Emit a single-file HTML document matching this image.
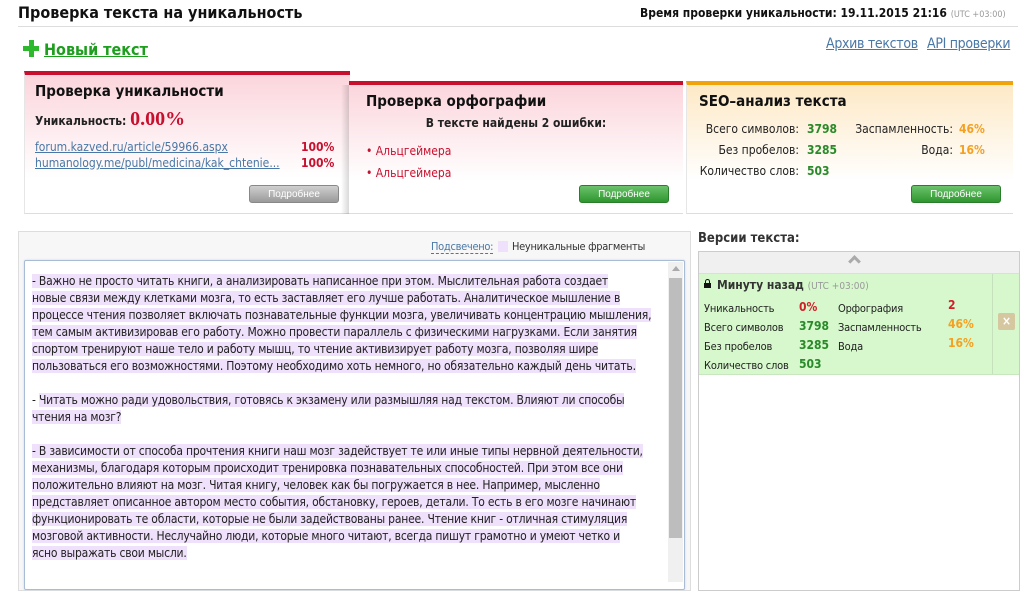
<!DOCTYPE html>
<html><head><meta charset="utf-8"><style>
*{margin:0;padding:0;box-sizing:border-box}
body{width:1026px;height:576px;overflow:hidden;background:#fff;font-family:"DejaVu Sans Condensed","Liberation Sans",sans-serif;color:#222;position:relative}
.a{position:absolute;white-space:nowrap}
.card{position:absolute;border-bottom:1px solid #ddd}
.btn{position:absolute;width:90px;height:18px;border-radius:3px;color:#fff;font-size:10px;text-align:center;line-height:17px;font-family:"Liberation Sans",sans-serif}
.g{background:linear-gradient(#6cc26c,#2e962e);border:1px solid #2a7d2a}
.gr{background:linear-gradient(#cfcfcf,#9a9a9a);border:1px solid #888}
.lnk{color:#4a77a5;text-decoration:underline}
.txt{font-size:12px;line-height:17px;font-family:"DejaVu Sans Condensed","Liberation Sans",sans-serif;letter-spacing:-0.2px;white-space:nowrap}
.h{background:#efe0fb}
</style></head><body>
<div class="a" style="left:18px;top:3px;font-size:16px;font-weight:bold;color:#111">Проверка текста на уникальность</div>
<div class="a" style="left:640px;top:6px;font-size:12px;font-weight:bold;color:#111">Время проверки уникальности: 19.11.2015 21:16 <span style="font-weight:normal;font-size:9px;color:#999">(UTC +03:00)</span></div>
<div class="a" style="left:18px;top:26px;width:1000px;height:1px;background:#ddd"></div>
<div class="a" style="left:23px;top:46px;width:16px;height:5px;background:#2db82d"></div>
<div class="a" style="left:29px;top:40px;width:5px;height:17px;background:#2db82d"></div>
<div class="a" style="left:44px;top:40px;font-size:16px;font-weight:bold;color:#1e9e1e;text-decoration:underline">Новый текст</div>
<div class="a lnk" style="left:826px;top:36px;font-size:14px;font-family:'DejaVu Sans Condensed',sans-serif;letter-spacing:-0.3px">Архив текстов</div>
<div class="a lnk" style="left:927px;top:36px;font-size:14px;font-family:'DejaVu Sans Condensed',sans-serif;letter-spacing:-0.3px">API проверки</div>

<div class="card" style="left:24px;top:71px;width:326px;height:143px;border-top:4px solid #c8102e;background:linear-gradient(#fbd5dc,#fff 75%);border-left:1px solid #e6e6e6">
<div class="a" style="left:10px;top:7px;font-size:15px;font-weight:bold;color:#111">Проверка уникальности</div>
<div class="a" style="left:10px;top:33px;font-size:12px;font-weight:bold">Уникальность: <span style="font-family:'Liberation Serif',serif;font-size:20px;color:#c8102e">0.00%</span></div>
<div class="a lnk" style="left:10px;top:64px;font-size:12px;line-height:16px">forum.kazved.ru/article/59966.aspx<br>humanology.me/publ/medicina/kak_chtenie...</div>
<div class="a" style="left:276px;top:64px;font-size:12px;line-height:16px;font-weight:bold;color:#c8102e">100%<br>100%</div>
<div class="btn gr" style="left:224px;top:110px">Подробнее</div>
</div>
<div class="card" style="left:349px;top:81px;width:334px;height:133px;border-top:4px solid #c8102e;background:linear-gradient(#fbd5dc,#fff 75%)">
<div class="a" style="left:-8px;top:0;width:8px;height:129px;background:linear-gradient(90deg,rgba(0,0,0,0),rgba(0,0,0,.15))"></div>
<div class="a" style="left:17px;top:7px;font-size:15px;font-weight:bold;color:#111">Проверка орфографии</div>
<div class="a" style="left:0;width:334px;text-align:center;top:31px;font-size:12px;font-weight:bold">В тексте найдены 2 ошибки:</div>
<div class="a" style="left:17px;top:55px;font-size:12px;line-height:22px;color:#c8102e">• Альцгеймера<br>• Альцгеймера</div>
<div class="btn g" style="left:230px;top:100px">Подробнее</div>
</div>
<div class="card" style="left:686px;top:81px;width:327px;height:133px;border-top:4px solid #f0a30a;background:linear-gradient(#fde9c6,#fff 75%);border-left:1px solid #e6e6e6">
<div class="a" style="left:12px;top:7px;font-size:15px;font-weight:bold;color:#111">SEO–анализ текста</div>
<div class="a" style="left:0;width:112px;text-align:right;top:34px;font-size:12px;line-height:21px">Всего символов:<br>Без пробелов:<br>Количество слов:</div>
<div class="a" style="left:120px;top:34px;font-size:12px;line-height:21px;font-weight:bold;color:#2a8a2a">3798<br>3285<br>503</div>
<div class="a" style="left:150px;width:116px;text-align:right;top:34px;font-size:12px;line-height:21px">Заспамленность:<br>Вода:</div>
<div class="a" style="left:272px;top:34px;font-size:12px;line-height:21px;font-weight:bold;color:#f5a020">46%<br>16%</div>
<div class="btn g" style="left:224px;top:100px">Подробнее</div>
</div>

<div class="a" style="left:18px;top:231px;width:673px;height:360px;border:1px solid #ddd;background:#f7f7f7"></div>
<div class="a" style="left:431px;top:240px;font-size:11px;color:#4a77a5;border-bottom:1px dashed #4a77a5;line-height:13px;letter-spacing:-0.3px">Подсвечено:</div>
<div class="a" style="left:498px;top:241px;width:10px;height:11px;background:#efe0fb"></div>
<div class="a" style="left:512px;top:240px;font-size:11px;color:#333;line-height:13px;letter-spacing:-0.3px">Неуникальные фрагменты</div>
<div class="a" style="left:24px;top:260px;width:661px;height:330px;border:1px solid #a9bcd6;background:#fff;border-radius:2px;box-shadow:0 0 2px #cdd8e8"></div>
<div class="a" style="left:668px;top:262px;width:15px;height:320px;background:#f0f0f0"></div>
<div class="a" style="left:669px;top:278px;width:13px;height:260px;background:#bdbdbd"></div>
<div class="a" style="left:672px;top:266px;width:0;height:0;border-left:4px solid transparent;border-right:4px solid transparent;border-bottom:5px solid #aaa"></div>
<div class="a txt" style="left:32px;top:273px">
<span class="h">- Важно не просто читать книги, а анализировать написанное при этом. Мыслительная работа создает</span><br>
<span class="h">новые связи между клетками мозга, то есть заставляет его лучше работать. Аналитическое мышление в</span><br>
<span class="h">процессе чтения позволяет включать познавательные функции мозга, увеличивать концентрацию мышления,</span><br>
<span class="h">тем самым активизировав его работу. Можно провести параллель с физическими нагрузками. Если занятия</span><br>
<span class="h">спортом тренируют наше тело и работу мышц, то чтение активизирует работу мозга, позволяя шире</span><br>
<span class="h">пользоваться его возможностями. Поэтому необходимо хоть немного, но обязательно каждый день читать.</span><br><br>
- <span class="h">Читать можно ради удовольствия, готовясь к экзамену или размышляя над текстом. Влияют ли способы</span><br>
<span class="h">чтения на мозг?</span><br><br>
<span class="h">- В зависимости от способа прочтения книги наш мозг задействует те или иные типы нервной деятельности,</span><br>
<span class="h">механизмы, благодаря которым происходит тренировка познавательных способностей. При этом все они</span><br>
<span class="h">положительно влияют на мозг. Читая книгу, человек как бы погружается в нее. Например, мысленно</span><br>
<span class="h">представляет описанное автором место события, обстановку, героев, детали. То есть в его мозге начинают</span><br>
<span class="h">функционировать те области, которые не были задействованы ранее. Чтение книг - отличная стимуляция</span><br>
<span class="h">мозговой активности. Неслучайно люди, которые много читают, всегда пишут грамотно и умеют четко и</span><br>
<span class="h">ясно выражать свои мысли.</span>
</div>

<div class="a" style="left:698px;top:231px;font-size:13px;font-weight:bold;color:#333">Версии текста:</div>
<div class="a" style="left:698px;top:251px;width:322px;height:340px;border:1px solid #ccc;background:#fff"></div>
<div class="a" style="left:699px;top:252px;width:320px;height:22px;background:#f0f0f0;border-bottom:1px solid #ddd"></div>
<div class="a" style="left:850px;top:257px;width:9px;height:9px;border-left:3px solid #aaa;border-top:3px solid #aaa;transform:rotate(45deg)"></div>
<div class="a" style="left:699px;top:274px;width:320px;height:101px;background:#d6f8cc;border-bottom:1px solid #c8e6c0"></div>
<div class="a" style="left:992px;top:274px;width:1px;height:100px;background:#c4e0bc"></div>
<div class="a" style="left:998px;top:313px;width:17px;height:17px;background:#d5c79f;border-radius:2px;color:#fff;font-size:12px;font-weight:bold;text-align:center;line-height:17px">×</div>
<div class="a" style="left:704px;top:283px;width:7px;height:5px;background:#111"></div>
<div class="a" style="left:705px;top:279px;width:5px;height:6px;border:1.5px solid #111;border-bottom:none;border-radius:3px 3px 0 0"></div>
<div class="a" style="left:717px;top:278px;font-size:12px;font-weight:bold;color:#333">Минуту назад <span style="font-weight:normal;font-size:10px;color:#999">(UTC +03:00)</span></div>
<div class="a" style="left:704px;top:299px;font-size:11px;line-height:19px;color:#222;letter-spacing:-0.2px">Уникальность<br>Всего символов<br>Без пробелов<br>Количество слов</div>
<div class="a" style="left:799px;top:298px;font-size:12px;line-height:19px;font-weight:bold;color:#2a8a2a"><span style="color:#d0202a">0%</span><br>3798<br>3285<br>503</div>
<div class="a" style="left:838px;top:299px;font-size:11px;line-height:19px;color:#222;letter-spacing:-0.2px">Орфография<br>Заспамленность<br>Вода</div>
<div class="a" style="left:948px;top:296px;font-size:12px;line-height:19px;font-weight:bold;color:#f5a020"><span style="color:#d0202a">2</span><br>46%<br>16%</div>
</body></html>
